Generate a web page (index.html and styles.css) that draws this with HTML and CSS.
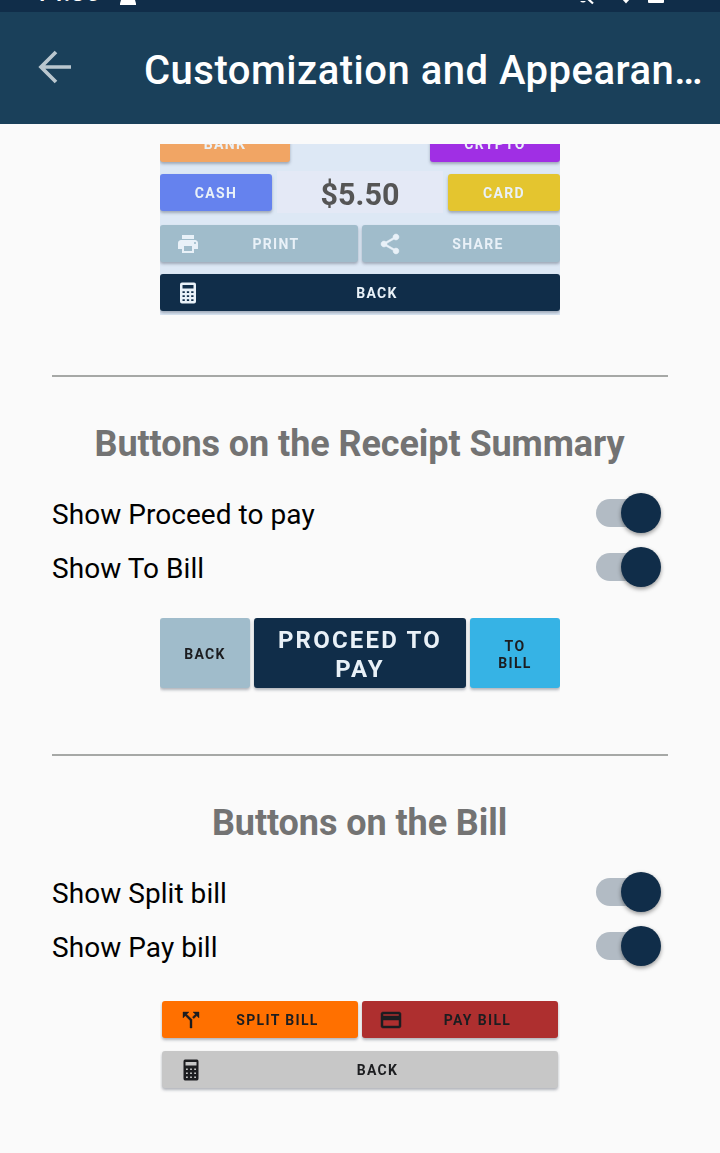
FILE: index.html
```html
<!DOCTYPE html>
<html lang="en">
<head>
<meta charset="utf-8">
<title>Customization and Appearance</title>
<link rel="stylesheet" href="styles.css">
</head>
<body>
<div class="statusbar">
  <span class="clock">14:36</span>
  <svg class="status-left" width="16" height="12" viewBox="0 0 16 12"><path d="M1 0h14l1 3.500v1.500H0V3.500z" fill="#fff"/></svg>
  <svg class="status-right" width="90" height="12" viewBox="0 0 90 12"><path d="M5 1q3 3 6 0z" fill="#fff"/><path d="M12 -2l6 5.500" stroke="#fff" stroke-width="2.200"/><path d="M47-1h8l-4 4.500z" fill="#fff"/><path d="M73 0h16v2q0 1-1 1H74q-1 0-1-1z" fill="#fff"/></svg>
</div>
<header class="appbar">
  <svg class="back-arrow" width="34" height="34" viewBox="0 0 34 34"><path d="M33 17H3M18 2L3 17l15 15" fill="none" stroke="#bac7cf" stroke-width="3.700"/></svg>
  <h1 class="title">Customization and Appearance</h1>
</header>
<main class="content">
  <div class="preview pay-preview">
    <div class="line spread clipped">
      <div class="btn bank"><span>BANK</span></div>
      <div class="btn crypto"><span>CRYPTO</span></div>
    </div>
    <div class="line amount-line">
      <div class="btn cash"><span>CASH</span></div>
      <div class="amount"><span>$5.50</span></div>
      <div class="btn card"><span>CARD</span></div>
    </div>
    <div class="line pair">
      <div class="btn steel with-icon">
        <svg class="icon" viewBox="0 0 24 24"><path d="M19 8H5c-1.660 0-3 1.340-3 3v6h4v4h12v-4h4v-6c0-1.660-1.340-3-3-3zm-3 11H8v-5h8v5zm3-7c-.55 0-1-.45-1-1s.45-1 1-1 1 .45 1 1-.45 1-1 1zm-1-9H6v4h12V3z"/></svg>
        <span>PRINT</span>
      </div>
      <div class="btn steel with-icon">
        <svg class="icon" viewBox="0 0 24 24"><path d="M18 16.080c-.76 0-1.440.3-1.960.77L8.910 12.700c.05-.23.09-.46.09-.7s-.04-.47-.09-.7l7.050-4.110c.54.5 1.250.81 2.040.81 1.660 0 3-1.340 3-3s-1.340-3-3-3-3 1.340-3 3c0 .24.04.47.09.7L8.040 9.810C7.500 9.310 6.790 9 6 9c-1.660 0-3 1.340-3 3s1.340 3 3 3c.79 0 1.500-.31 2.040-.81l7.120 4.160c-.05.21-.08.43-.08.65 0 1.610 1.310 2.920 2.920 2.920s2.920-1.310 2.920-2.920-1.310-2.920-2.920-2.920z" stroke="currentColor" stroke-width=".5"/></svg>
        <span>SHARE</span>
      </div>
    </div>
    <div class="btn navy with-icon">
      <svg class="icon" viewBox="0 0 24 24"><path fill-rule="evenodd" d="M6 1.500h12q2 0 2 2v17q0 2-2 2H6q-2 0-2-2v-17q0-2 2-2zM6.500 4v3.500h11V4zM6.500 10.300v1.700h2.300v-1.700zm4.350 0v1.700h2.300v-1.700zm4.350 0v1.700h2.300v-1.700zM6.500 14.300V16h2.300v-1.700zm4.350 0V16h2.300v-1.700zm4.350 0V16h2.300v-1.700zM6.500 18.300V20h2.300v-1.700zm4.350 0V20h2.300v-1.700zm4.350 0V20h2.300v-1.700z"/></svg>
      <span>BACK</span>
    </div>
  </div>

  <section class="group">
    <h2>Buttons on the Receipt Summary</h2>
    <div class="setting"><span>Show Proceed to pay</span><i class="switch"></i></div>
    <div class="setting"><span>Show To Bill</span><i class="switch"></i></div>
    <div class="preview summary-preview">
      <div class="btn steel dark-text"><span>BACK</span></div>
      <div class="btn proceed"><span>PROCEED TO<br>PAY</span></div>
      <div class="btn sky dark-text"><span>TO<br>BILL</span></div>
    </div>
  </section>

  <section class="group">
    <h2>Buttons on the Bill</h2>
    <div class="setting"><span>Show Split bill</span><i class="switch"></i></div>
    <div class="setting"><span>Show Pay bill</span><i class="switch"></i></div>
    <div class="preview bill-preview">
      <div class="line pair">
        <div class="btn orange with-icon dark-text">
          <svg class="icon" viewBox="0 0 24 24"><path d="M14 4l2.290 2.290-2.880 2.880 1.420 1.420 2.880-2.880L20 10V4h-6zm-4 0H4v6l2.290-2.290 4.710 4.700V20h2v-8.410l-5.290-5.300L10 4z" stroke="currentColor" stroke-width=".4"/></svg>
          <span>SPLIT BILL</span>
        </div>
        <div class="btn red with-icon dark-text">
          <svg class="icon" viewBox="0 0 24 24"><path d="M20 4H4c-1.110 0-1.990.89-1.990 2L2 18c0 1.110.89 2 2 2h16c1.110 0 2-.89 2-2V6c0-1.110-.89-2-2-2zm0 14H4v-6h16v6zm0-10H4V6h16v2z" stroke="currentColor" stroke-width=".5"/></svg>
          <span>PAY BILL</span>
        </div>
      </div>
      <div class="btn grey with-icon dark-text">
        <svg class="icon" viewBox="0 0 24 24"><path fill-rule="evenodd" d="M6 1.500h12q1.500 0 1.500 2v17q0 2-1.500 2H6q-1.500 0-1.500-2v-17q0-2 1.500-2zM6.500 4v3.500h11V4zM7 10.500V12h1.800v-1.500zm4.100 0V12h1.800v-1.500zm4.100 0V12H17v-1.500zM7 14.500V16h1.800v-1.500zm4.100 0V16h1.800v-1.500zm4.100 0V16H17v-1.500zM7 18.500V20h1.800v-1.500zm4.100 0V20h1.800v-1.500zm4.100 0V20H17v-1.500z"/></svg>
        <span>BACK</span>
      </div>
    </div>
  </section>
</main>
</body>
</html>
```
FILE: styles.css
```css
* { box-sizing: border-box; }
body {
  margin: 0;
  height: 1153px;
  overflow: hidden;
  background: #fafafa;
  color: #000;
  font-family: Roboto, "Liberation Sans", sans-serif;
}
.statusbar {
  display: flex;
  height: 12px;
  padding: 0 55px 0 34px;
  background: #102d49;
  color: #fff;
  overflow: hidden;
}
.clock {
  width: 86px;
  height: 28px;
  margin-top: -22px;
  font-size: 26px;
  line-height: 28px;
  font-weight: 500;
}
.status-right { margin-left: auto; }
.appbar {
  display: flex;
  align-items: center;
  height: 112px;
  padding: 0 16px 0 38px;
  background: #1a405a;
}
.back-arrow { flex: none; margin: -2px 72px 0 0; }
.title {
  flex: 1;
  min-width: 0;
  margin: 6px 0 0;
  color: #fff;
  font-size: 40px;
  line-height: 56px;
  font-weight: 500;
  letter-spacing: 0.500px;
  white-space: nowrap;
  overflow: hidden;
  text-overflow: ellipsis;
}
.content { padding: 20px 52px 0; }
.group {
  border-top: 2px solid #a6a8a6;
}
h2 {
  margin: 0;
  padding: 44px 1px 20px 0;
  color: #737373;
  font-size: 36px;
  line-height: 46px;
  font-weight: 700;
  letter-spacing: -0.080px;
  text-align: center;
  white-space: nowrap;
}
.setting {
  display: flex;
  align-items: center;
  justify-content: space-between;
  height: 54px;
  padding-right: 7px;
  font-size: 28px;
  letter-spacing: 0.050px;
}
.switch {
  display: flex;
  align-items: center;
  justify-content: flex-end;
  width: 65px;
  height: 28px;
  margin-top: -2px;
  border-radius: 14px;
  background: linear-gradient(90deg, #b2bbc4 0 54px, transparent 54px);
}
.switch::after {
  content: "";
  width: 40px;
  height: 40px;
  border-radius: 50%;
  background: #102d49;
  box-shadow: 0 2px 4px rgba(0, 0, 0, 0.4);
}
.preview {
  width: 400px;
  margin: 0 auto;
  overflow: hidden;
}
.line { display: flex; }
.spread { justify-content: space-between; }
.pair { gap: 4px; }
.pair .btn { flex: 1; }
.btn {
  display: flex;
  align-items: center;
  justify-content: center;
  height: 37px;
  border-radius: 3px;
  box-shadow: 0 2px 3px rgba(40, 50, 70, 0.35);
  color: #e9f1f8;
  font-size: 14px;
  line-height: 17px;
  font-weight: 700;
  letter-spacing: 1.350px;
  text-align: center;
}
.btn > span, .icon, .amount > span { filter: blur(0.6px); }
.dark-text { color: #1c1d20; }
.icon {
  width: 24px;
  height: 24px;
  flex: none;
  fill: currentColor;
}
.with-icon { padding: 0 16px; }
.with-icon > span { flex: 1; padding: 2px 0 0 10px; }
.pay-preview {
  height: 171px;
  margin-bottom: 60px;
  background: #dde8f5;
}
.clipped .btn { width: 130px; margin-top: -19px; }
.clipped .btn > span { margin-top: 2px; }
.bank { background: #f1a564; }
.crypto { background: #a02fe4; }
.amount-line { align-items: center; height: 42px; margin-top: 9px; }
.cash { width: 112px; background: #6582ee; }
.card { width: 112px; background: #e4c52f; }
.cash > span, .card > span { margin-top: 2px; }
.amount {
  display: flex;
  align-items: center;
  justify-content: center;
  flex: 1;
  height: 42px;
  margin: 0 5px;
  padding-top: 4px;
  background: #e4e9f6;
  color: #555;
  font-size: 30.500px;
  font-weight: 700;
}
.pay-preview .pair { margin-top: 12px; }
.steel { background: #a0bccb; }
.pay-preview .steel { width: 198px; }
.navy { margin-top: 12px; background: #102d49; }
.summary-preview {
  display: flex;
  gap: 4px;
  height: 76px;
  margin-top: 23px;
  margin-bottom: 60px;
}
.summary-preview .btn { height: 70px; padding-top: 3px; }
.summary-preview .steel, .sky { width: 90px; }
.sky { background: #36b3e5; }
.summary-preview .proceed {
  flex: 1;
  padding-top: 4px;
  background: #102d49;
  font-size: 24px;
  line-height: 29px;
  letter-spacing: 2.200px;
}
.bill-preview {
  margin-top: 27px;
  padding: 0 2px;
  height: 94px;
}
.orange { background: #ff7000; }
.red { background: #ae2f2f; }
.grey { margin-top: 13px; background: #c7c7c7; }
.orange .icon, .red .icon, .grey .icon { margin-left: 1px; }
```
